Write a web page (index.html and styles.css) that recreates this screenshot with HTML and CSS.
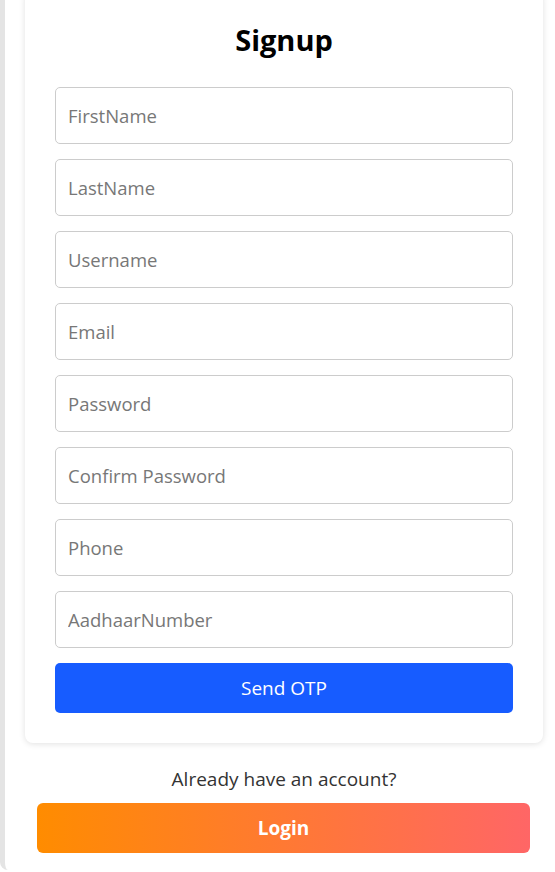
FILE: index.html
```html
<!DOCTYPE html>
<html lang="en">
<head>
<meta charset="utf-8">
<title>Signup</title>
<link rel="stylesheet" href="styles.css">
</head>
<body>
<div class="page">
  <div class="card">
    <h2 class="title">Signup</h2>
    <form class="form">
      <input class="field" type="text" placeholder="FirstName">
      <input class="field" type="text" placeholder="LastName">
      <input class="field" type="text" placeholder="Username">
      <input class="field" type="email" placeholder="Email">
      <input class="field" type="password" placeholder="Password">
      <input class="field" type="password" placeholder="Confirm Password">
      <input class="field" type="tel" placeholder="Phone">
      <input class="field" type="text" placeholder="AadhaarNumber">
      <button class="btn-otp" type="button">Send OTP</button>
    </form>
  </div>
  <p class="already">Already have an account?</p>
  <button class="btn-login" type="button">Login</button>
</div>
</body>
</html>
```

FILE: styles.css
```css
html, body {
  margin: 0;
  padding: 0;
  background: #ffffff;
}
body {
  font-family: "Open Sans", "Noto Sans", sans-serif;
  overflow: hidden;
}
.page {
  border-left: 5px solid #e4e4e4;
  border-bottom-left-radius: 8px;
  height: 870px;
  box-sizing: border-box;
  display: flex;
  flex-direction: column;
  align-items: flex-start;
}
.card {
  margin-top: -10px;
  margin-left: 20px;
  width: 518px;
  box-sizing: border-box;
  background: #fff;
  border-radius: 8px;
  box-shadow: 0 1px 6px rgba(0, 0, 0, 0.12);
  padding: 32px 30px 30px;
}
.title {
  margin: 0 0 30px;
  text-align: center;
  font-size: 29px;
  line-height: 35px;
  font-weight: 700;
  color: #000;
}
.form {
  display: flex;
  flex-direction: column;
  gap: 15px;
}
.field {
  height: 57px;
  box-sizing: border-box;
  border: 1px solid #cccccc;
  border-radius: 5px;
  padding: 0 12px;
  font-family: inherit;
  font-size: 18.5px;
  color: #333;
  background: #fff;
}
.field::placeholder {
  color: #777777;
}
.btn-otp {
  height: 50px;
  border: none;
  border-radius: 5px;
  background: #175cff;
  color: #fff;
  font-family: inherit;
  font-size: 19px;
}
.already {
  margin: 23px 0 0;
  width: 518px;
  margin-left: 20px;
  text-align: center;
  font-size: 19px;
  line-height: 26px;
  color: #333333;
}
.btn-login {
  margin-top: 11px;
  margin-left: 32px;
  width: 493px;
  height: 50px;
  border: none;
  border-radius: 6px;
  background: linear-gradient(90deg, #ff8c00, #ff6666);
  color: #fff;
  font-family: inherit;
  font-size: 19px;
  font-weight: 700;
}
```
